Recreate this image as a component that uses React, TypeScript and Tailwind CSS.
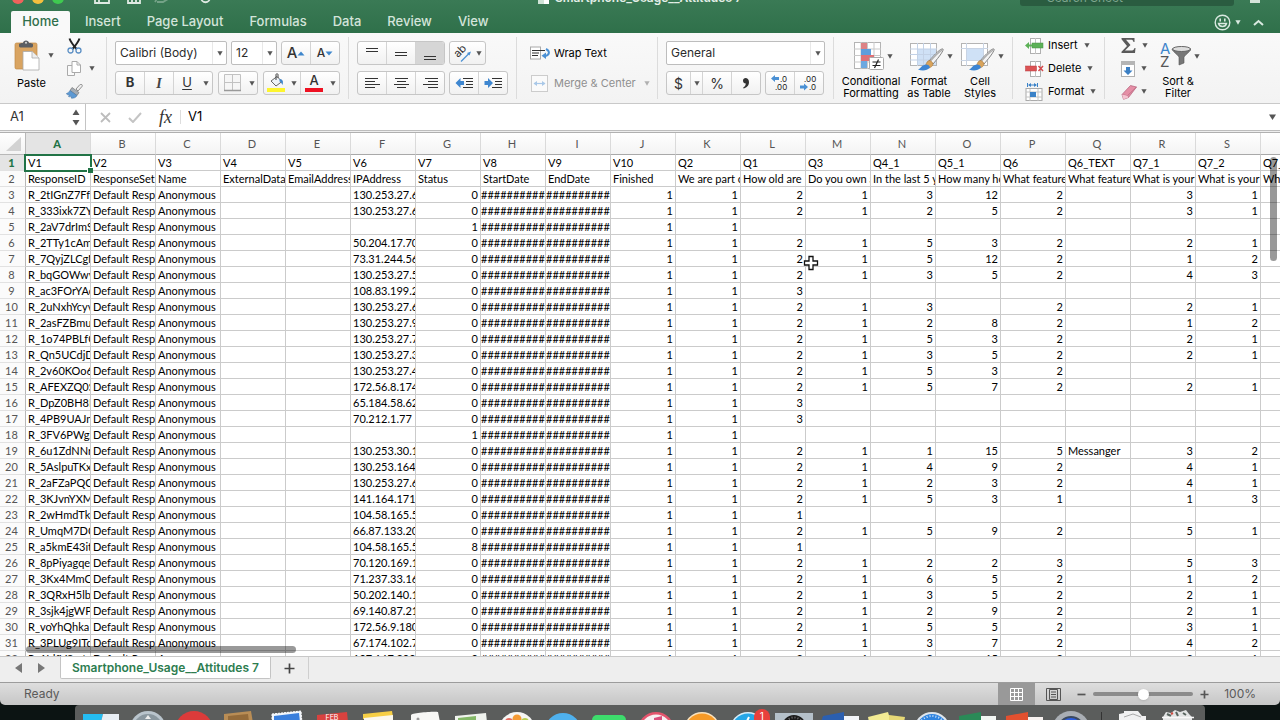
import React from "react";

type Row = [string, string, string, string, string, string, string, string, string, string, string];

const COLUMNS = "ABCDEFGHIJKLMNOPQRST".split("");

const VARIABLES = ["V1", "V2", "V3", "V4", "V5", "V6", "V7", "V8", "V9", "V10", "Q2", "Q1", "Q3", "Q4_1", "Q5_1", "Q6", "Q6_TEXT", "Q7_1", "Q7_2", "Q7_3"];

const QUESTIONS = [
  "ResponseID", "ResponseSet", "Name", "ExternalData", "EmailAddress", "IPAddress", "Status", "StartDate", "EndDate", "Finished",
  "We are part of", "How old are", "Do you own a", "In the last 5 y", "How many ho", "What feature", "What feature", "What is your", "What is your", "What is your",
];

// id, ip address, status, then the answers of columns L to S
const ROWS: Row[] = [
  ["R_2tIGnZ7Ffr", "130.253.27.6", "0", "2", "1", "3", "12", "2", "", "3", "1"],
  ["R_333ixk7ZYX", "130.253.27.6", "0", "2", "1", "2", "5", "2", "", "3", "1"],
  ["R_2aV7drImS", "", "1", "", "", "", "", "", "", "", ""],
  ["R_2TTy1cAm", "50.204.17.70", "0", "2", "1", "5", "3", "2", "", "2", "1"],
  ["R_7QyjZLCgN", "73.31.244.56", "0", "2", "1", "5", "12", "2", "", "1", "2"],
  ["R_bqGOWwv", "130.253.27.5", "0", "2", "1", "3", "5", "2", "", "4", "3"],
  ["R_ac3FOrYAc", "108.83.199.2", "0", "3", "", "", "", "", "", "", ""],
  ["R_2uNxhYcyv", "130.253.27.6", "0", "2", "1", "3", "", "2", "", "2", "1"],
  ["R_2asFZBmu", "130.253.27.9", "0", "2", "1", "2", "8", "2", "", "1", "2"],
  ["R_1o74PBLfC", "130.253.27.7", "0", "2", "1", "5", "3", "2", "", "2", "1"],
  ["R_Qn5UCdjD", "130.253.27.3", "0", "2", "1", "3", "5", "2", "", "2", "1"],
  ["R_2v60KOo6", "130.253.27.4", "0", "2", "1", "5", "3", "2", "", "", ""],
  ["R_AFEXZQ0S", "172.56.8.174", "0", "2", "1", "5", "7", "2", "", "2", "1"],
  ["R_DpZ0BH8H", "65.184.58.62", "0", "3", "", "", "", "", "", "", ""],
  ["R_4PB9UAJn", "70.212.1.77", "0", "3", "", "", "", "", "", "", ""],
  ["R_3FV6PWgZ", "", "1", "", "", "", "", "", "", "", ""],
  ["R_6u1ZdNNr", "130.253.30.1", "0", "2", "1", "1", "15", "5", "Messanger", "3", "2"],
  ["R_5AslpuTKx", "130.253.164", "0", "2", "1", "4", "9", "2", "", "4", "1"],
  ["R_2aFZaPQC", "130.253.27.6", "0", "2", "1", "2", "3", "2", "", "4", "1"],
  ["R_3KJvnYXM", "141.164.171", "0", "2", "1", "5", "3", "1", "", "1", "3"],
  ["R_2wHmdTk", "104.58.165.5", "0", "1", "", "", "", "", "", "", ""],
  ["R_UmqM7DC", "66.87.133.20", "0", "2", "1", "5", "9", "2", "", "5", "1"],
  ["R_a5kmE43it", "104.58.165.5", "8", "1", "", "", "", "", "", "", ""],
  ["R_8pPiyagqe", "70.120.169.1", "0", "2", "1", "2", "2", "3", "", "5", "3"],
  ["R_3Kx4MmC", "71.237.33.16", "0", "2", "1", "6", "5", "2", "", "1", "2"],
  ["R_3QRxH5lb", "50.202.140.1", "0", "2", "1", "3", "5", "2", "", "2", "1"],
  ["R_3sjk4jgWP", "69.140.87.21", "0", "2", "1", "2", "9", "2", "", "2", "1"],
  ["R_voYhQhka", "172.56.9.180", "0", "2", "1", "5", "5", "2", "", "3", "1"],
  ["R_3PLUg9ITd", "67.174.102.7", "0", "2", "1", "3", "7", "2", "", "4", "2"],
  ["R_1IdfV8mt", "107.167.200", "0", "2", "1", "3", "15", "2", "", "3", "1"],
];

function sheetRow(r: Row): string[] {
  const dates = "############";
  return [r[0], "Default Resp", "Anonymous", "", "", r[1], r[2], dates, dates, "1", "1", ...r.slice(3), ""];
}

const SHEET: string[][] = [VARIABLES, QUESTIONS, ...ROWS.map(sheetRow)];

function cellStyle(text: string) {
  if (text.startsWith("##")) return "text-left text-[11px]";
  if (/^\d{1,2}$/.test(text)) return "pr-[2px] text-right text-[11px]";
  return "pl-[2px] text-left text-[11px]";
}

function Caret({ tone = "#555" }: { tone?: string }) {
  return (
    <svg width="6" height="5" viewBox="0 0 6 5" className="shrink-0" aria-hidden="true">
      <path d="M0.4 0.3h5.2L3 4.8z" fill={tone} />
    </svg>
  );
}

function Separator() {
  return <div className="my-1 w-px shrink-0 bg-[#dcdcdc]" />;
}

const BOX = "flex h-6 shrink-0 overflow-hidden rounded-[3px] border border-[#c6c6c6] bg-gradient-to-b from-white to-[#f1f1f1]";
const SEG = "flex items-center justify-center border-[#d4d4d4] ";

function Picker({ label, value, box, divider }: { label: string; value: string; box: string; divider: boolean }) {
  return (
    <label className={"flex h-6 items-center rounded-[2px] border border-[#bdbdbd] bg-white " + box}>
      <select aria-label={label} className="h-full min-w-0 flex-1 appearance-none bg-transparent pl-1 text-[12px] text-[#2b2b2b] outline-none" defaultValue={value}>
        <option>{value}</option>
      </select>
      <span className={"flex h-full w-[14px] items-center justify-center " + (divider ? "border-l border-[#e8e8e8]" : "")}>
        <Caret />
      </span>
    </label>
  );
}

function Lines({ rows }: { rows: [number, number, number][] }) {
  return (
    <svg width="17" height="16" viewBox="0 0 17 16" aria-hidden="true">
      {rows.map(([x, y, w]) => (
        <rect key={y} x={x} y={y} width={w} height="1" fill="#333" />
      ))}
    </svg>
  );
}

function IndentIcon({ right }: { right: boolean }) {
  return (
    <svg width="19" height="16" viewBox="0 0 19 16" aria-hidden="true">
      {right ? (
        <path d="M0.500 6h3.500V3L9 8l-5 5V10H0.500z" fill="#3f87d0" />
      ) : (
        <path d="M9 6H5.500V3L0.500 8l5 5V10H9z" fill="#3f87d0" />
      )}
      <path d="M8 3.500h10M11 6.500h7M11 9.500h7M8 12.500h10" stroke="#333" />
    </svg>
  );
}

function DecimalIcon({ more }: { more: boolean }) {
  return (
    <svg width="20" height="18" viewBox="0 0 20 18" aria-hidden="true" fontFamily="Inter, sans-serif" fontSize="8" fill="#222">
      {more ? (
        <>
          <path d="M1 4.500L5 1v2h4v3H5v2z" fill="#4a90d4" />
          <text x="10" y="8">.0</text>
          <text x="5" y="16">.00</text>
        </>
      ) : (
        <>
          <text x="5" y="8">.00</text>
          <path d="M9 13L5 9.500v2H1v3h4v2z" fill="#4a90d4" />
          <text x="10" y="16">.0</text>
        </>
      )}
    </svg>
  );
}

function Brush() {
  return (
    <g>
      <path d="M33 7C34 8 30 14 23 22l-4-3C25 12 31 6 33 7z" fill="#f4f4f4" stroke="#777" strokeWidth="0.900" />
      <path d="M32 8C29 10 25 14 20 19.500" stroke="#aaa" strokeWidth="1.200" fill="none" />
      <path d="M19 18.500c2 0 4 2 4 4-1 3-5 4.500-8 3 1-2 1-6 4-7z" fill="#d9a45c" stroke="#a8773a" strokeWidth="0.600" />
      <path d="M15.500 22.500c3 0 4 1 4.500 3-3 3.500-8 3.500-12 2 3-1 3-4 7.500-5z" fill="#3d85d3" />
    </g>
  );
}

function ConditionalIcon() {
  return (
    <svg width="30" height="29" viewBox="0 0 30 29" aria-hidden="true">
      <rect x="0.500" y="0.500" width="26" height="26" fill="#fff" stroke="#b4b4b4" />
      <path d="M0 7h27M0 13.500h27M0 20h27M7 0v27M20 0v27M13.500 0v27" stroke="#c9c9c9" />
      <path d="M7 1h6v6H7z" fill="#dd8285" />
      <path d="M7 7h10v6H7z" fill="#5d9edc" />
      <path d="M7 13h13v6H7z" fill="#dd7277" />
      <path d="M7 19h6v7H7z" fill="#6ca8e0" />
      <rect x="15.500" y="15.500" width="14" height="12" rx="1" fill="#fff" stroke="#aaa" />
      <path d="M18.500 20h8M18.500 23.500h8M24.500 17.500l-4 8.500" stroke="#222" strokeWidth="1.200" />
    </svg>
  );
}

function TableStyleIcon({ cell }: { cell: boolean }) {
  return (
    <svg width="34" height="29" viewBox="0 0 34 29" aria-hidden="true">
      <rect x="0.500" y="1.500" width="26" height="22" fill="#fff" stroke="#b4b4b4" />
      {cell ? (
        <>
          <path d="M5.500 1v23M22.500 1v23M0 6.500h27M0 18.500h27" stroke="#c9d4e4" />
          <rect x="6" y="7" width="16" height="11" fill="#cfe1f6" />
        </>
      ) : (
        <>
          <rect x="8" y="7" width="18" height="16" fill="#cfe1f6" />
          <path d="M7.500 1v23M13.500 1v23M20.500 1v23M0 7h27M0 12.500h27M0 18h27" stroke="#c3d2e6" />
        </>
      )}
      <Brush />
    </svg>
  );
}

function TallButton({ icon, lines, box }: { icon: React.ReactNode; lines: string[]; box: string }) {
  return (
    <button type="button" className={"flex shrink-0 flex-col items-center pt-[9px] " + box}>
      <span className="flex h-[33px] items-start gap-[3px] pl-1">
        {icon}
        <span className="pt-3"><Caret /></span>
      </span>
      {lines.map((l) => (
        <span key={l} className="whitespace-nowrap text-[11px] leading-3 text-black">{l}</span>
      ))}
    </button>
  );
}

function SmallRow({ icon, label, box = "" }: { icon: React.ReactNode; label: string; box?: string }) {
  return (
    <button type="button" aria-label={label} className={"flex h-[23px] items-center gap-1 text-[11px] text-black " + box}>
      {icon}
      <span>{label}</span>
      <span className="pl-[2px]"><Caret /></span>
    </button>
  );
}

function CellsIcon({ kind }: { kind: "insert" | "delete" | "format" }) {
  return (
    <svg width="19" height="18" viewBox="0 0 19 18" aria-hidden="true" className="shrink-0">
      {kind === "format" ? (
        <>
          <rect x="1" y="5.500" width="16" height="12" fill="#fff" stroke="#aaa" />
          <path d="M1 9h16M1 14h16M5 6v12M13 6v12" stroke="#c4c4c4" />
          <rect x="5" y="9" width="6" height="5" fill="#3b82c8" />
          <path d="M2.500 0v4M12.500 0v4M4 2h7" stroke="#3b82c8" />
          <path d="M3 2l3-2v4zM12 2L9 0v4z" fill="#3b82c8" />
        </>
      ) : (
        <>
          <rect x="5.500" y="1.500" width="10" height="15" fill="#fff" stroke="#b0b0b0" />
          <path d="M10.500 1v16" stroke="#c4c4c4" />
          {kind === "insert" ? (
            <>
              <rect x="7" y="6" width="11" height="5" fill="#5cb157" stroke="#489144" strokeWidth="0.500" />
              <path d="M7 7.500H4V5L0 8.500 4 12V9.500h3z" fill="#5cb157" />
            </>
          ) : (
            <>
              <rect x="0.500" y="6" width="11" height="5" fill="#dc5355" stroke="#b73c40" strokeWidth="0.500" />
              <path d="M13.500 6l4.500 5M18 6l-4.500 5" stroke="#d4474b" strokeWidth="1.500" />
            </>
          )}
        </>
      )}
    </svg>
  );
}

function ClipboardGroup() {
  return (
    <div className="flex w-[106px] shrink-0 pl-[14px]">
      <button type="button" className="flex w-[50px] flex-col items-start pt-[7px]">
        <span className="flex items-center gap-2">
          <svg width="26" height="31" viewBox="0 0 26 31" aria-hidden="true">
            <rect x="1" y="3" width="22" height="26" rx="1.500" fill="#d9a461" stroke="#c08a45" strokeWidth="0.700" />
            <path d="M5 6V4.500C5 3.500 7 3 9 3c0-3.500 6-3.500 6 0 2 0 4 .5 4 1.500V6c0 1-1 1.500-2 1.500H7C6 7.500 5 7 5 6z" fill="#5c5f63" />
            <circle cx="12" cy="2.800" r="1" fill="#ddd" />
            <path d="M9 11.500h9l7 6.500v12H9z" fill="#fff" stroke="#a9a9a9" strokeWidth="0.800" />
            <path d="M18 11.500V18h7" fill="#eee" stroke="#a9a9a9" strokeWidth="0.800" />
          </svg>
          <Caret />
        </span>
        <span className="pl-[3px] text-[11px] leading-6 text-black">Paste</span>
      </button>
      <div className="flex flex-col pt-px">
        <button type="button" aria-label="Cut" className="flex h-[23px] items-center pl-[3px]">
          <svg width="15" height="16" viewBox="0 0 15 16" aria-hidden="true">
            <path d="M2.500 0.500c1 3 4 7 7 10.500M12.500 0.500c-1 3-4 7-7 10.500" stroke="#222" strokeWidth="2" fill="none" />
            <circle cx="3.500" cy="12.500" r="2.500" fill="none" stroke="#5b8fc4" strokeWidth="1.300" />
            <circle cx="11.500" cy="12.500" r="2.500" fill="none" stroke="#5b8fc4" strokeWidth="1.300" />
          </svg>
        </button>
        <button type="button" aria-label="Copy" className="flex h-[23px] items-center gap-2 pl-[3px]">
          <svg width="14" height="16" viewBox="0 0 14 16" aria-hidden="true">
            <path d="M0.500 4.500h7v10h-7z" fill="#fafafa" stroke="#aaa" />
            <path d="M5 0.500h5l3.500 3.500v7.500H5z" fill="#fff" stroke="#aaa" />
            <path d="M10 0.500V4h3.500" fill="none" stroke="#aaa" />
          </svg>
          <Caret />
        </button>
        <button type="button" aria-label="Format Painter" className="flex h-[23px] items-center pl-[2px]">
          <svg width="17" height="15" viewBox="0 0 17 15" aria-hidden="true">
            <path d="M10 5l4-4.500c1-1 3 .5 2 2L12 7z" fill="#eee" stroke="#777" strokeWidth="0.800" />
            <path d="M6 3.500l7 5-2 3L4 6.500z" fill="#a5adb5" stroke="#777" strokeWidth="0.700" />
            <path d="M4 6.500l7 5C10 14 7 14.500 5 14c.5-1 .5-1.500 0-2-1 1-2 1-2.500.5.5-1 .5-1.500 0-2C1.500 11 .5 10.500.5 9.500 2 9 3 8 4 6.500z" fill="#5d99d3" stroke="#416f9e" strokeWidth="0.500" />
          </svg>
        </button>
      </div>
    </div>
  );
}

function FontGroup() {
  return (
    <div className="flex shrink-0 flex-col gap-[6px] px-2 pt-2">
      <div className="flex gap-1">
        <Picker label="Font" value="Calibri (Body)" box="w-[112px]" divider />
        <Picker label="Font size" value="12" box="w-[46px]" divider />
        <div className={BOX}>
          <button type="button" aria-label="Increase font size" className={SEG + "w-[29px] border-r text-[15px] font-medium text-[#333]"}>
            A<svg width="8" height="5" viewBox="0 0 8 5" aria-hidden="true"><path d="M4 0.500L7.500 4.500h-7z" fill="#3e86cc" /></svg>
          </button>
          <button type="button" aria-label="Decrease font size" className={SEG + "w-[28px] text-[12px] font-medium text-[#333]"}>
            A<svg width="8" height="5" viewBox="0 0 8 5" aria-hidden="true"><path d="M4 4.500L7.500 0.500h-7z" fill="#3e86cc" /></svg>
          </button>
        </div>
      </div>
      <div className="flex gap-[5px]">
        <div className={BOX}>
          <button type="button" aria-label="Bold" className={SEG + "w-[29px] border-r text-[13px] font-bold text-[#333]"}>B</button>
          <button type="button" aria-label="Italic" className={SEG + "w-[29px] border-r font-[Liberation_Serif,serif] text-[14px] font-bold text-[#444] italic"}>I</button>
          <button type="button" aria-label="Underline" className={SEG + "w-[26px] text-[13px] text-[#333] underline underline-offset-2"}>U</button>
          <button type="button" aria-label="Underline styles" className={SEG + "w-3"}><Caret /></button>
        </div>
        <div className={BOX}>
          <button type="button" aria-label="Borders" className={SEG + "w-[27px]"}>
            <svg width="18" height="18" viewBox="0 0 18 18" aria-hidden="true">
              <path d="M0.500 0.500h16v16H0.500zM8.500 0.500v16M0.500 8.500h16" fill="#f6f6f6" stroke="#c2c2c2" />
              <path d="M0 16.500h17" stroke="#999" strokeWidth="1.500" />
            </svg>
          </button>
          <button type="button" aria-label="Border styles" className={SEG + "w-[11px]"}><Caret /></button>
        </div>
        <div className={BOX}>
          <button type="button" aria-label="Fill colour" className={SEG + "w-6"}>
            <svg width="18" height="20" viewBox="0 0 18 20" aria-hidden="true">
              <path d="M4 8l6-4.500 5 5-6 4.500z" fill="#eef3f9" stroke="#555" strokeWidth="0.900" />
              <path d="M9 7V1.500C9 0.500 11 0.500 11 1.500V5" fill="none" stroke="#444" />
              <path d="M12.500 6c3.500 0 4 3 3 6-1-1-1-3-3-3.500z" fill="#3e86cc" />
              <rect x="0" y="15" width="18" height="4" fill="#fdf52f" />
            </svg>
          </button>
          <button type="button" aria-label="Fill colours" className={SEG + "w-[13px] border-r"}><Caret /></button>
          <button type="button" aria-label="Font colour" className={SEG + "w-[26px]"}>
            <svg width="18" height="20" viewBox="0 0 18 20" aria-hidden="true">
              <text x="9" y="12" textAnchor="middle" fontFamily="Inter, sans-serif" fontWeight="500" fontSize="13" fill="#333">A</text>
              <rect x="0" y="15" width="18" height="4" fill="#ee1122" />
            </svg>
          </button>
          <button type="button" aria-label="Font colours" className={SEG + "w-3"}><Caret /></button>
        </div>
      </div>
    </div>
  );
}

function AlignGroup() {
  return (
    <div className="flex shrink-0 flex-col gap-[6px] px-2 pt-2">
      <div className="flex gap-1">
        <div className={BOX}>
          <button type="button" aria-label="Top align" className={SEG + "w-[29px] border-r"}><Lines rows={[[2, 3, 12], [2, 6, 12]]} /></button>
          <button type="button" aria-label="Middle align" className={SEG + "w-[29px] border-r"}><Lines rows={[[2, 7, 12], [2, 10, 12]]} /></button>
          <button type="button" aria-label="Bottom align" className={SEG + "w-[28px] bg-[#d6d6d6]"}><Lines rows={[[2, 11, 12], [2, 14, 12]]} /></button>
        </div>
        <div className={BOX}>
          <button type="button" aria-label="Orientation" className="flex w-[35px] items-center justify-center gap-1">
            <svg width="19" height="19" viewBox="0 0 19 19" aria-hidden="true">
              <text x="0" y="0" transform="translate(5 14) rotate(-45)" fontFamily="Inter, sans-serif" fontSize="11" fill="#333">ab</text>
              <path d="M8 17.500l8-8" stroke="#4a90d4" strokeWidth="1.200" />
              <path d="M18 7.500l-1.500 4-2.500-2.500z" fill="#4a90d4" />
            </svg>
            <Caret />
          </button>
        </div>
      </div>
      <div className="flex gap-1">
        <div className={BOX}>
          <button type="button" aria-label="Align left" className={SEG + "w-[29px] border-r"}><Lines rows={[[1, 3, 13], [1, 6, 10], [1, 9, 15], [1, 12, 10]]} /></button>
          <button type="button" aria-label="Centre" className={SEG + "w-[29px] border-r"}><Lines rows={[[2, 3, 13], [4, 6, 9], [1, 9, 15], [4, 12, 9]]} /></button>
          <button type="button" aria-label="Align right" className={SEG + "w-[28px]"}><Lines rows={[[3, 3, 13], [6, 6, 10], [1, 9, 15], [6, 12, 10]]} /></button>
        </div>
        <div className={BOX}>
          <button type="button" aria-label="Decrease indent" className={SEG + "w-[29px] border-r"}><IndentIcon right={false} /></button>
          <button type="button" aria-label="Increase indent" className={SEG + "w-[28px]"}><IndentIcon right /></button>
        </div>
      </div>
    </div>
  );
}

function WrapGroup() {
  return (
    <div className="flex w-[140px] shrink-0 flex-col gap-[6px] pt-2 pl-3">
      <button type="button" className="flex h-6 items-center gap-1 text-[11px] text-black">
        <svg width="21" height="14" viewBox="0 0 21 14" aria-hidden="true">
          <rect x="1.500" y="1" width="10" height="12" fill="#fff" stroke="#aaa" />
          <path d="M3 4.500h13M3 7h7M3 9.500h6" stroke="#333" />
          <path d="M17 3c4 2 4 6-1 7" fill="none" stroke="#4a90d4" strokeWidth="2" />
          <path d="M17 6.500v6.500L12.500 9.700z" fill="#4a90d4" />
        </svg>
        Wrap Text
      </button>
      <button type="button" className="flex h-6 items-center gap-1 whitespace-nowrap text-[11px] text-[#8f8f8f]" disabled>
        <svg width="21" height="17" viewBox="0 0 21 17" aria-hidden="true">
          <rect x="2.500" y="0.500" width="16" height="16" fill="#fafafa" stroke="#ccc" />
          <path d="M5 8.500h11" stroke="#a9c8e8" strokeWidth="1.200" />
          <path d="M4.500 8.500l3.500-2.500v5zM16.500 8.500L13 6v5z" fill="#a9c8e8" />
        </svg>
        Merge &amp; Center
        <span className="pl-1"><Caret tone="#b0b0b0" /></span>
      </button>
    </div>
  );
}

function NumberGroup() {
  return (
    <div className="flex shrink-0 flex-col gap-[6px] px-2 pt-2">
      <Picker label="Number format" value="General" box="w-[159px]" divider />
      <div className="flex gap-1">
        <div className={BOX}>
          <button type="button" aria-label="Currency" className={SEG + "w-6 border-r text-[14px] text-[#333]"}>$</button>
          <button type="button" aria-label="Currency formats" className={SEG + "w-3 border-r"}><Caret /></button>
          <button type="button" aria-label="Percent" className={SEG + "w-[29px] border-r text-[14px] text-[#333]"}>%</button>
          <button type="button" aria-label="Comma style" className={SEG + "w-[28px]"}>
            <svg width="8" height="12" viewBox="0 0 8 12" aria-hidden="true">
              <path d="M1 3.500C1 0 7 0 7 5c0 4-3 6-5.500 6.500l-.3-1C3 9.500 3.800 8 3.800 6.500 2 6.500 1 5.500 1 3.500z" fill="#333" />
            </svg>
          </button>
        </div>
        <div className={BOX}>
          <button type="button" aria-label="Increase decimal" className={SEG + "w-[29px] border-r"}><DecimalIcon more /></button>
          <button type="button" aria-label="Decrease decimal" className={SEG + "w-[28px]"}><DecimalIcon more={false} /></button>
        </div>
      </div>
    </div>
  );
}

function EditGroup() {
  return (
    <div className="flex shrink-0 pl-4">
      <div className="flex flex-col pt-px">
        <button type="button" aria-label="AutoSum" className="flex h-[23px] items-center gap-[6px]">
          <svg width="15" height="17" viewBox="0 0 15 17" aria-hidden="true">
            <path d="M0.500 1h13v4h-1C12 3 11 2.800 9.500 2.800H5L9.500 8 4 13.500h6c2 0 3-.5 3.500-2.500h1l-.5 5H0.500v-1.200L6 9 0.500 2.200z" fill="#5a5a5a" />
          </svg>
          <Caret />
        </button>
        <button type="button" aria-label="Fill" className="flex h-[23px] items-center gap-[5px]">
          <svg width="15" height="16" viewBox="0 0 15 16" aria-hidden="true">
            <rect x="0.500" y="0.500" width="13" height="15" fill="#fff" stroke="#b0b0b0" />
            <rect x="0" y="0" width="14" height="4" fill="#b5b5b5" />
            <path d="M5 6h4v3.500h2.500L7 14 2.500 9.500H5z" fill="#3b7fc4" />
          </svg>
          <Caret />
        </button>
        <button type="button" aria-label="Clear" className="flex h-[23px] items-center gap-1">
          <svg width="16" height="16" viewBox="0 0 16 16" aria-hidden="true">
            <path d="M1 10.500L9.500 1.500l6 1.500-8 10.500-5 1.800z" fill="#e58fa6" stroke="#b35f78" strokeWidth="0.700" />
            <path d="M1 10.500l5.500 1.200 1 1.800M6.500 11.700l9-8.700" fill="none" stroke="#b8667e" strokeWidth="0.700" />
            <path d="M1 10.500l5.500 1.200 1 1.800-5 1.800z" fill="#f4c3d0" />
          </svg>
          <Caret />
        </button>
      </div>
      <TallButton
        box="w-[60px]"
        lines={["Sort &", "Filter"]}
        icon={
          <svg width="31" height="28" viewBox="0 0 31 28" aria-hidden="true" fontFamily="Inter, sans-serif" fontSize="15">
            <text x="0" y="12" fill="#3e86cc">A</text>
            <text x="0" y="25" fill="#555">Z</text>
            <path d="M12 7c0 2 5 5 7 8v8l5-2v-6c2-3 7-6 7-8z" fill="#777" stroke="#555" strokeWidth="0.600" />
            <ellipse cx="21.500" cy="7" rx="9" ry="2.500" fill="#ddd" stroke="#666" />
          </svg>
        }
      />
    </div>
  );
}

function TitleBar() {
  return (
    <div className="h-[11px] overflow-hidden">
      <div className="-mt-4 grid h-[27px] grid-cols-[1fr_auto_1fr] items-center">
        <div className="flex items-center pl-3">
          <div className="flex gap-2">
            <span className="h-3 w-3 rounded-full bg-[#f0625c]" />
            <span className="h-3 w-3 rounded-full bg-[#f5bf3e]" />
            <span className="h-3 w-3 rounded-full bg-[#3fc950]" />
          </div>
          <svg width="120" height="18" viewBox="0 0 120 18" className="ml-[30px]" aria-hidden="true" fill="none" stroke="#dfeae3" strokeWidth="1.800">
            <path d="M1 2v12h14V2M5 14v-4h10" />
            <path d="M34 4v10h12V4M38 14v-4h4v4" />
            <path d="M63 13h6l5-3M64 8l-3 5" stroke="#74a287" />
            <path d="M107 8c0 7 9 7 9 0" />
          </svg>
        </div>
        <div className="flex items-center gap-[5px] text-[12px] font-semibold text-[#e3eee7]">
          <svg width="12" height="14" viewBox="0 0 12 14" aria-hidden="true"><path d="M2 1h9v12H2z" fill="#fff" /><path d="M0 7h6v6H0z" fill="#cfe3d6" /></svg>
          Smartphone_Usage__Attitudes 7
        </div>
        <div className="flex items-center justify-end gap-4 pr-5">
          <div className="flex h-[17px] w-[214px] items-center rounded-[3px] bg-[#2a5c40] pl-[27px] text-[12px] text-[#7fa68f]">Search Sheet</div>
          <span className="h-[10px] w-[10px] bg-[#d5e4da]" />
        </div>
      </div>
    </div>
  );
}

function RibbonTabs() {
  const tabs = ["Insert", "Page Layout", "Formulas", "Data", "Review", "View"];
  return (
    <nav className="flex h-[22px] items-center pr-4 pl-[11px] text-[13px] font-medium text-[#d3e4da]">
      <a href="#home" className="flex h-full w-[59px] items-center justify-center rounded-t-[2px] bg-[#f9f9f9] text-[#2f6f4b]">Home</a>
      <div className="flex gap-[26px] pl-[15px]">
        {tabs.map((t) => (
          <a key={t} href={"#" + t.toLowerCase().replace(" ", "-")} className="whitespace-nowrap">{t}</a>
        ))}
      </div>
      <div className="ml-auto flex items-center">
        <button type="button" aria-label="Feedback" className="flex items-center gap-1">
          <svg width="17" height="17" viewBox="0 0 17 17" aria-hidden="true" fill="none" stroke="#d9e9e0" strokeWidth="1.400">
            <circle cx="8.500" cy="8.500" r="7.300" />
            <path d="M4.500 9.500c1 4 7 4 8 0z" />
            <path d="M6.200 4.500v3M10.800 4.500v3" strokeWidth="1.600" />
          </svg>
          <Caret tone="#d9e9e0" />
        </button>
        <button type="button" aria-label="Collapse ribbon" className="pl-3">
          <svg width="11" height="7" viewBox="0 0 11 7" aria-hidden="true"><path d="M1 6l4.500-4L10 6" fill="none" stroke="#d9e9e0" strokeWidth="2" /></svg>
        </button>
      </div>
    </nav>
  );
}

function FormulaBar() {
  return (
    <div className="flex h-[27px] shrink-0 items-stretch border-b border-[#bdbdbd] bg-white">
      <div className="flex w-[86px] shrink-0 items-center border-r border-[#c4c4c4] pr-[5px] pl-[10px]">
        <input aria-label="Name box" defaultValue="A1" className="w-full min-w-0 bg-transparent text-[13px] text-[#333] outline-none" />
        <svg width="8" height="17" viewBox="0 0 8 17" className="shrink-0" aria-hidden="true">
          <path d="M4 0.500L7.500 6h-7zM4 16.500L7.500 11h-7z" fill="#555" />
        </svg>
      </div>
      <div className="flex w-[94px] shrink-0 items-center justify-between border-[#ddd] pr-2 pl-[14px]">
        <svg width="11" height="11" viewBox="0 0 11 11" aria-hidden="true"><path d="M1 1l9 9M10 1l-9 9" stroke="#bdbdbd" strokeWidth="1.800" /></svg>
        <svg width="14" height="11" viewBox="0 0 14 11" aria-hidden="true"><path d="M1 6l4 4 8-9" fill="none" stroke="#c4c4c4" strokeWidth="2" /></svg>
        <span className="font-[Liberation_Serif,serif] text-[18px] leading-none text-[#333] italic">fx</span>
      </div>
      <div className="my-[6px] w-px bg-[#ddd]" />
      <input aria-label="Formula" defaultValue="V1" className="min-w-0 flex-1 bg-transparent pl-[7px] text-[13px] text-black outline-none" />
      <button type="button" aria-label="Expand formula bar" className="pr-[4px]">
        <svg width="7" height="6" viewBox="0 0 7 6" aria-hidden="true"><path d="M0 0.500h7L3.500 6z" fill="#555" /></svg>
      </button>
    </div>
  );
}

function Sheet() {
  return (
    <main className="relative min-h-0 flex-1 overflow-hidden bg-white font-[Lato,sans-serif]">
      <table className="w-[1326px] table-fixed border-separate border-spacing-0">
        <colgroup>
          <col className="w-[26px]" />
          {COLUMNS.map((c) => (
            <col key={c} className="w-[65px]" />
          ))}
        </colgroup>
        <thead>
          <tr className="h-[22px] bg-gradient-to-b from-white to-[#f3f3f3]">
            <th className="border-r border-b border-[#b8b8b8] p-0">
              <svg width="15" height="14" viewBox="0 0 15 14" className="ml-[6px]" aria-hidden="true"><path d="M15 0v14H0z" fill="#d2d2d2" /></svg>
            </th>
            {COLUMNS.map((c, i) => (
              <th
                key={c}
                scope="col"
                className={
                  "border-r border-b border-r-[#dadada] border-b-[#a9a9a9] p-0 pr-[2px] text-[11px] leading-5 " +
                  (i === 0 ? "bg-[#e4e4e4] font-black text-[#217346]" : "font-normal text-[#555]")
                }
              >
                {c}
              </th>
            ))}
          </tr>
        </thead>
        <tbody>
          {SHEET.map((cells, r) => (
            <tr key={r} className="h-4">
              <th
                scope="row"
                className={
                  "border-r border-b border-r-[#b8b8b8] border-b-[#e2e2e2] p-0 pr-[2px] text-center text-[11px] leading-[15px] " +
                  (r === 0 ? "bg-[#e4e4e4] font-black text-[#217346]" : "bg-[#fbfbfb] font-normal text-[#555]")
                }
              >
                {r + 1}
              </th>
              {cells.map((text, c) => (
                <td key={c} className={"overflow-hidden border-r border-b border-[#cbcbcb] p-0 leading-[15px] whitespace-nowrap text-black " + cellStyle(text)}>
                  {text}
                </td>
              ))}
            </tr>
          ))}
        </tbody>
      </table>
      <div className="absolute top-[21px] left-6 h-[18px] w-[68px] border-2 border-[#217346]">
        <div className="absolute -right-[3px] -bottom-[3px] h-[6px] w-[6px] border-t border-l border-white bg-[#217346]" />
      </div>
      <div className="absolute bottom-[3px] left-[26px] h-[7px] w-[270px] rounded-full bg-black/40" />
      <div className="absolute top-6 right-[3px] h-[104px] w-[7px] rounded-full bg-black/40" />
      <svg width="16" height="16" viewBox="0 0 16 16" className="absolute top-[122px] left-[803px]" aria-hidden="true">
        <path d="M6 1.500h4V6h4.500v4H10v4.500H6V10H1.500V6H6z" fill="#fff" stroke="#111" strokeWidth="1.300" />
      </svg>
    </main>
  );
}

function SheetTabs() {
  return (
    <div className="flex h-[26px] shrink-0 items-start border-t border-[#c8c8c8] bg-[#eeeeee]">
      <div className="flex w-[60px] items-center justify-between pt-[6px] pr-[15px] pl-[15px]">
        <button type="button" aria-label="Previous sheet"><svg width="7" height="10" viewBox="0 0 7 10" aria-hidden="true"><path d="M7 0v10L0 5z" fill="#777" /></svg></button>
        <button type="button" aria-label="Next sheet"><svg width="7" height="10" viewBox="0 0 7 10" aria-hidden="true"><path d="M0 0v10l7-5z" fill="#777" /></svg></button>
      </div>
      <button type="button" className="h-[22px] w-[211px] rounded-b-[2px] border-x border-b border-[#c4c4c4] bg-white pt-px text-[12px] font-semibold whitespace-nowrap text-[#2d7d50]">Smartphone_Usage__Attitudes 7</button>
      <button type="button" aria-label="Add sheet" className="flex h-[23px] w-[37px] items-center justify-center">
        <svg width="11" height="11" viewBox="0 0 11 11" aria-hidden="true"><path d="M5.500 0.500v10M0.500 5.500h10" stroke="#444" strokeWidth="1.700" /></svg>
      </button>
      <div className="h-[22px] w-px bg-[#cfcfcf]" />
    </div>
  );
}

function StatusBar() {
  return (
    <div className="flex h-[23px] shrink-0 items-stretch rounded-b-[5px] border-t border-[#9c9c9c] bg-gradient-to-b from-[#dedede] to-[#c6c6c6] pl-6 text-[12px] text-[#5a5a5a]">
      <span className="flex items-center">Ready</span>
      <div className="ml-auto flex items-stretch pr-6">
        <button type="button" aria-label="Normal view" className="flex w-[37px] items-center justify-center bg-[#999]">
          <svg width="13" height="13" viewBox="0 0 13 13" aria-hidden="true"><path d="M0.500 0.500h12v12H0.500zM4.500 0.500v12M8.500 0.500v12M0.500 4.500h12M0.500 8.500h12" fill="none" stroke="#fff" /></svg>
        </button>
        <button type="button" aria-label="Page layout view" className="flex w-[36px] items-center justify-center">
          <svg width="15" height="13" viewBox="0 0 15 13" aria-hidden="true" fill="none" stroke="#555">
            <path d="M0.500 0.500h14v12H0.500zM3.500 1.500h8v10h-8zM5 4h5M5 6.500h5M5 9h5" />
          </svg>
        </button>
        <button type="button" aria-label="Zoom out" className="ml-[6px] flex items-center"><svg width="9" height="9" viewBox="0 0 9 9" aria-hidden="true"><path d="M0.500 4.500h8" stroke="#555" strokeWidth="1.700" /></svg></button>
        <input
          type="range"
          aria-label="Zoom"
          min="0"
          max="100"
          defaultValue="50"
          className="mx-[7px] my-auto h-1 w-[100px] appearance-none rounded-full bg-[#8b8b8b] [&::-webkit-slider-thumb]:h-[11px] [&::-webkit-slider-thumb]:w-[11px] [&::-webkit-slider-thumb]:appearance-none [&::-webkit-slider-thumb]:rounded-full [&::-webkit-slider-thumb]:bg-white [&::-webkit-slider-thumb]:shadow"
        />
        <button type="button" aria-label="Zoom in" className="flex items-center"><svg width="9" height="9" viewBox="0 0 9 9" aria-hidden="true"><path d="M0.500 4.500h8M4.500 0.500v8" stroke="#555" strokeWidth="1.700" /></svg></button>
        <span className="flex w-[47px] items-center justify-end">100%</span>
      </div>
    </div>
  );
}

const DOCK: { name: string; art: React.ReactNode }[] = [
  { name: "Finder", art: <><path d="M0 9h20l-2 8H0z" fill="#25bdf2" /><path d="M20 9h16v8H18z" fill="#e8eef4" /></> },
  { name: "Launchpad", art: <><circle cx="19" cy="24" r="18" fill="#b9c4cc" /><circle cx="19" cy="24" r="15" fill="#8a979f" /><path d="M16 14l3-4 3 4z" fill="#eee" /></> },
  { name: "Recorder", art: <circle cx="19" cy="25" r="19" fill="#dc3b3a" /> },
  { name: "Contacts", art: <><path d="M3 9l27-3 2 12H3z" fill="#b98d55" /><path d="M7 11l20-2 1 8H7z" fill="#946b3a" /></> },
  { name: "Mail", art: <><path d="M4 9l29-3 1 12H4z" fill="#f1f6fb" stroke="#fff" strokeDasharray="2 1" /><path d="M6 11l25-3 1 9H6z" fill="#3a7fdc" /></> },
  { name: "Calendar", art: <><path d="M3 10l30-3 1 10H3z" fill="#d8423f" /><text x="18" y="15" textAnchor="middle" fontSize="7" fontFamily="Inter, sans-serif" fill="#fff">FEB</text></> },
  { name: "Notes", art: <><path d="M3 9l29-3 1 6-30 2z" fill="#f7cf45" /><path d="M4 13l29-3v7H4z" fill="#fbf8ee" /></> },
  { name: "Reminders", art: <><path d="M5 10c0-2 24-4 27-3l2 10H5z" fill="#f7f7f5" /><circle cx="12" cy="14" r="1.500" fill="#999" /></> },
  { name: "Pages", art: <><path d="M3 11l31-3 1 9H3z" fill="#f0f3ee" /><path d="M6 13l18-2v6H6z" fill="#84b868" /></> },
  { name: "Photos", art: <><circle cx="19" cy="25" r="18" fill="#f6f6f4" /><circle cx="19" cy="14" r="4.500" fill="#f59b35" /><circle cx="11" cy="17" r="4" fill="#e56a5e" /><circle cx="27" cy="17" r="4" fill="#b9cf52" /></> },
  { name: "Messages", art: <circle cx="19" cy="26" r="18" fill="#4fb1ee" /> },
  { name: "FaceTime", art: <rect x="2" y="10" width="34" height="20" rx="5" fill="#3ddc6c" /> },
  { name: "iTunes", art: <><circle cx="19" cy="25" r="18" fill="#e4546d" /><circle cx="19" cy="25" r="15.500" fill="#f7f0f3" /><path d="M17 13l8-2v5h-8z" fill="#d94f7c" /></> },
  { name: "iBooks", art: <><circle cx="19" cy="25" r="18" fill="#fae2bd" /><circle cx="19" cy="25" r="16.500" fill="#f79a26" /></> },
  { name: "App Store", art: <><circle cx="19" cy="25" r="18" fill="#d8eefa" /><circle cx="19" cy="25" r="16.500" fill="#25a6e6" /><path d="M18 16l2-4" stroke="#fff" strokeWidth="2" /></> },
  { name: "System Preferences", art: <><rect x="0" y="8" width="38" height="10" fill="#b4c0c9" /><circle cx="19" cy="22" r="12" fill="#1a1a1a" /><circle cx="19" cy="22" r="9.500" fill="none" stroke="#777" strokeWidth="2" strokeDasharray="1 2" /></> },
  { name: "Word", art: <><path d="M2 11L23 7v10H0z" fill="#2b5fb0" /><path d="M23 11h15v6H23z" fill="#f2f4f8" /></> },
  { name: "Stickies", art: <><path d="M1 12l20-5 3 10H2z" fill="#f3eb93" /><path d="M22 10l16 2-1 5H22z" fill="#e6d876" /></> },
  { name: "Safari", art: <><circle cx="19" cy="25" r="18" fill="#dfe6ec" /><circle cx="19" cy="25" r="16" fill="#2f84e0" /><circle cx="19" cy="25" r="14" fill="none" stroke="#cfe4fa" strokeWidth="2" strokeDasharray="1 2" /></> },
  { name: "Excel", art: <><path d="M0 11l22-4v10H0z" fill="#2a8a57" /><path d="M22 11h15v6H22z" fill="#f2f6f3" /></> },
  { name: "PowerPoint", art: <><path d="M0 11l22-4v10H0z" fill="#e2502f" /><path d="M22 12h15v6H22z" fill="#f8f2f0" /></> },
  { name: "QuickTime", art: <><circle cx="19" cy="25" r="19" fill="#a9aeb4" /><circle cx="19" cy="25" r="14" fill="#3c4a60" /><circle cx="19" cy="25" r="12" fill="#2e5fe0" /></> },
];

function Dock() {
  return (
    <footer className="flex h-[15px] shrink-0 justify-center">
      <div className="flex w-[1130px] max-w-full items-start justify-between rounded-t-[4px] bg-[#5b5d5c] px-2">
        {DOCK.map((d) => (
          <a key={d.name} href={"#" + d.name.toLowerCase().replace(" ", "-")} aria-label={d.name} className="relative">
            <svg width="38" height="15" viewBox="0 0 38 15" className="block overflow-hidden" aria-hidden="true">{d.art}</svg>
            {d.name === "App Store" && (
              <span className="absolute top-1 -right-[3px] h-[11px] w-4 overflow-hidden rounded-t-full bg-[#e8403c] text-center text-[10px] leading-[14px] text-white">1</span>
            )}
          </a>
        ))}
        <span className="mx-[3px] mt-[7px] h-2 w-px bg-[#333]" />
        <a href="#downloads" aria-label="Downloads">
          <svg width="38" height="15" viewBox="0 0 38 15" className="block" aria-hidden="true"><path d="M6 15V9l5-1V6h14l4 5h4v4z" fill="#f1f1f1" /><path d="M11 12l9-3 8 3" stroke="#aaa" fill="none" /></svg>
        </a>
        <a href="#trash" aria-label="Trash">
          <svg width="38" height="15" viewBox="0 0 38 15" className="block" aria-hidden="true">
            <path d="M4 12l3-5 5 1 4-3 5 2 6-2 3 4 3 3v3H4z" fill="#e2e4e4" />
            <path d="M8 9l4 2M17 7l2 4M24 8l3 2" stroke="#58645e" strokeWidth="2" />
            <path d="M3 12.500h32" stroke="#f8f8f8" strokeWidth="1.500" />
            <path d="M12 9l2-1" stroke="#d04b40" strokeWidth="2" />
          </svg>
        </a>
      </div>
    </footer>
  );
}

export default function App() {
  return (
    <div className="flex h-screen flex-col overflow-hidden bg-[#0c1413] font-[Inter,sans-serif]">
      <header className="shrink-0 bg-gradient-to-b from-[#3a7a55] to-[#2f704a]">
        <TitleBar />
        <RibbonTabs />
      </header>
      <section aria-label="Ribbon" className="flex h-[71px] shrink-0 overflow-hidden border-b border-[#c9c9c9] bg-gradient-to-b from-[#f9f9f9] to-[#f3f3f3]">
        <ClipboardGroup />
        <Separator />
        <FontGroup />
        <Separator />
        <AlignGroup />
        <Separator />
        <WrapGroup />
        <Separator />
        <NumberGroup />
        <Separator />
        <div className="flex shrink-0 pr-[6px] pl-1">
          <TallButton box="w-[66px]" lines={["Conditional", "Formatting"]} icon={<ConditionalIcon />} />
          <TallButton box="w-[50px]" lines={["Format", "as Table"]} icon={<TableStyleIcon cell={false} />} />
          <TallButton box="w-[52px]" lines={["Cell", "Styles"]} icon={<TableStyleIcon cell />} />
        </div>
        <Separator />
        <div className="flex w-[91px] shrink-0 flex-col pt-px pl-3">
          <SmallRow icon={<CellsIcon kind="insert" />} label="Insert" />
          <SmallRow icon={<CellsIcon kind="delete" />} label="Delete" />
          <SmallRow icon={<CellsIcon kind="format" />} label="Format" />
        </div>
        <Separator />
        <EditGroup />
      </section>
      <FormulaBar />
      <div className="h-[2px] shrink-0 border-b border-[#b0b0b0] bg-[#eee]" />
      <Sheet />
      <SheetTabs />
      <StatusBar />
      <Dock />
    </div>
  );
}
